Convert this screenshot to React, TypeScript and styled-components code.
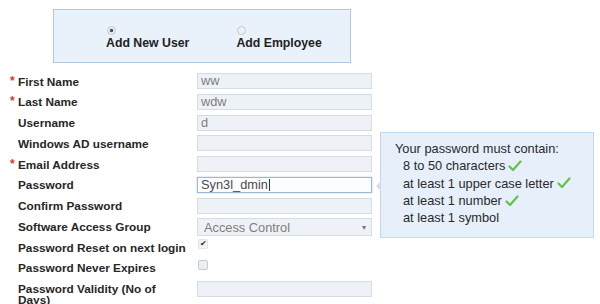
import React from 'react';
import styled, { createGlobalStyle } from 'styled-components';

const GlobalStyle = createGlobalStyle`
  html, body {
    margin: 0;
    padding: 0;
    background: #fff;
  }
  body {
    font-family: "Liberation Sans", Arial, sans-serif;
  }
`;

interface Field {
  label: string;
  required?: boolean;
  kind: 'text' | 'select' | 'check';
  value?: string;
  checked?: boolean;
  focused?: boolean;
}

const fields: Field[] = [
  { label: 'First Name', required: true, kind: 'text', value: 'ww' },
  { label: 'Last Name', required: true, kind: 'text', value: 'wdw' },
  { label: 'Username', kind: 'text', value: 'd' },
  { label: 'Windows AD username', kind: 'text' },
  { label: 'Email Address', required: true, kind: 'text' },
  { label: 'Password', kind: 'text', value: 'Syn3l_dmin', focused: true },
  { label: 'Confirm Password', kind: 'text' },
  { label: 'Software Access Group', kind: 'select', value: 'Access Control' },
  { label: 'Password Reset on next login', kind: 'check', checked: true },
  { label: 'Password Never Expires', kind: 'check', checked: false },
  { label: 'Password Validity (No of Days)', kind: 'text' },
];

const rules = [
  { text: '8 to 50 characters', ok: true },
  { text: 'at least 1 upper case letter', ok: true },
  { text: 'at least 1 number', ok: true },
  { text: 'at least 1 symbol', ok: false },
];

const Check = () => (
  <svg width="14" height="12" viewBox="0 0 14 12">
    <path d="M1.5 6.5 L5 10 L12.5 1.5" fill="none" stroke="#62c34c" strokeWidth="2.2" strokeLinecap="round" strokeLinejoin="round" />
  </svg>
);

const App: React.FC = () => {
  return (
    <Page>
      <GlobalStyle />
      <TypePanel>
        <RadioOption>
          <Radio $selected />
          <RadioLabel>Add New User</RadioLabel>
        </RadioOption>
        <RadioOption>
          <Radio />
          <RadioLabel>Add Employee</RadioLabel>
        </RadioOption>
      </TypePanel>

      <Form>
        {fields.map((f) => (
          <Row key={f.label}>
            <Label>
              <Mark>{f.required ? '*' : ''}</Mark>
              <LabelText>{f.label}</LabelText>
            </Label>
            {f.kind === 'text' && (
              <TextBox $focused={f.focused}>
                {f.value}
                {f.focused && <Caret />}
              </TextBox>
            )}
            {f.kind === 'select' && (
              <SelectBox>
                <span>{f.value}</span>
                <Arrow>▾</Arrow>
              </SelectBox>
            )}
            {f.kind === 'check' && (
              <CheckBox $checked={f.checked}>{f.checked && <Tick>✔</Tick>}</CheckBox>
            )}
          </Row>
        ))}
      </Form>

      <Hint>
        <HintTitle>Your password must contain:</HintTitle>
        <RuleList>
          {rules.map((r) => (
            <Rule key={r.text}>
              {r.text}
              {r.ok && <Check />}
            </Rule>
          ))}
        </RuleList>
      </Hint>
    </Page>
  );
};

export default App;

const Page = styled.div`
  position: relative;
  width: 600px;
  height: 304px;
  overflow: hidden;
  padding-top: 9px;
  box-sizing: border-box;
`;

const TypePanel = styled.div`
  margin-left: 53px;
  width: 298px;
  height: 54px;
  box-sizing: border-box;
  background: #e9f2fb;
  border: 1px solid #b4c8dd;
  display: flex;
  gap: 47px;
  padding: 16px 0 0 52px;
`;

const RadioOption = styled.div`
  display: flex;
  flex-direction: column;
  align-items: flex-start;
`;

const Radio = styled.span<{ $selected?: boolean }>`
  width: 7px;
  height: 7px;
  margin-left: 1px;
  border-radius: 50%;
  border: 1px solid #c4c9cf;
  background: ${({ $selected }) =>
    $selected ? 'radial-gradient(circle, #555 0 1.6px, #eef0f2 2.1px)' : '#eef0f2'};
`;

const RadioLabel = styled.span`
  font-size: 12.3px;
  font-weight: bold;
  color: #222;
  line-height: 14px;
  margin-top: 1px;
`;

const Form = styled.div`
  margin-top: 10px;
  display: flex;
  flex-direction: column;
`;

const Row = styled.div`
  display: flex;
  align-items: flex-start;
  height: 20.75px;
`;

const Label = styled.div`
  width: 197px;
  flex-shrink: 0;
  display: flex;
  padding: 3.5px 0 0 10px;
  box-sizing: border-box;
  font-size: 11.8px;
  font-weight: bold;
  color: #262626;
  line-height: 11px;
`;

const Mark = styled.span`
  width: 8px;
  flex-shrink: 0;
  color: #d33a35;
  font-size: 12px;
  line-height: 8px;
`;

const LabelText = styled.span`
  max-width: 172px;
`;

const TextBox = styled.div<{ $focused?: boolean }>`
  width: 175px;
  height: 16px;
  box-sizing: border-box;
  border: 1px solid ${({ $focused }) => ($focused ? '#9db7d7' : '#d3dde8')};
  background: ${({ $focused }) => ($focused ? '#fbfdff' : '#eef2f7')};
  box-shadow: ${({ $focused }) => ($focused ? '0 0 2px #b8cde6' : 'none')};
  font-size: 12.8px;
  line-height: 14px;
  padding-left: 3px;
  color: ${({ $focused }) => ($focused ? '#4a4a4a' : '#7d7d7d')};
  display: flex;
  align-items: center;
`;

const Caret = styled.span`
  width: 1px;
  height: 12px;
  background: #333;
  margin-left: 1px;
`;

const SelectBox = styled.div`
  width: 175px;
  height: 18px;
  box-sizing: border-box;
  border: 1px solid #d3dde8;
  background: #eef2f7;
  font-size: 12.8px;
  color: #7d7d7d;
  padding: 0 5px 0 6px;
  display: flex;
  align-items: center;
  justify-content: space-between;
`;

const Arrow = styled.span`
  font-size: 8px;
  color: #777;
`;

const CheckBox = styled.span<{ $checked?: boolean }>`
  display: flex;
  align-items: center;
  justify-content: center;
  width: 8px;
  height: 8px;
  margin: 0 0 0 1px;
  border: 1px solid ${({ $checked }) => ($checked ? '#e2e5e8' : '#c5cbd1')};
  border-radius: 2px;
  background: ${({ $checked }) => ($checked ? '#f3f4f6' : '#eceff2')};
`;

const Tick = styled.span`
  font-size: 8px;
  color: #333;
  line-height: 8px;
`;

const Hint = styled.div`
  position: absolute;
  left: 380px;
  top: 132px;
  width: 214px;
  height: 106px;
  box-sizing: border-box;
  background: #e6effa;
  border: 1px solid #c4d7ec;
  padding: 7px 0 0 14px;

  &::before {
    content: '';
    position: absolute;
    left: -5px;
    top: 48px;
    border-width: 5px 5px 5px 0;
    border-style: solid;
    border-color: transparent #d2dde9 transparent transparent;
  }
`;

const HintTitle = styled.div`
  font-size: 12.8px;
  color: #2a2a2a;
  line-height: 17.3px;
`;

const RuleList = styled.ul`
  list-style: none;
  margin: 0 0 0 8px;
  padding: 0;
`;

const Rule = styled.li`
  font-size: 12.8px;
  color: #2a2a2a;
  height: 17.3px;
  display: flex;
  align-items: center;
  gap: 3px;
`;
